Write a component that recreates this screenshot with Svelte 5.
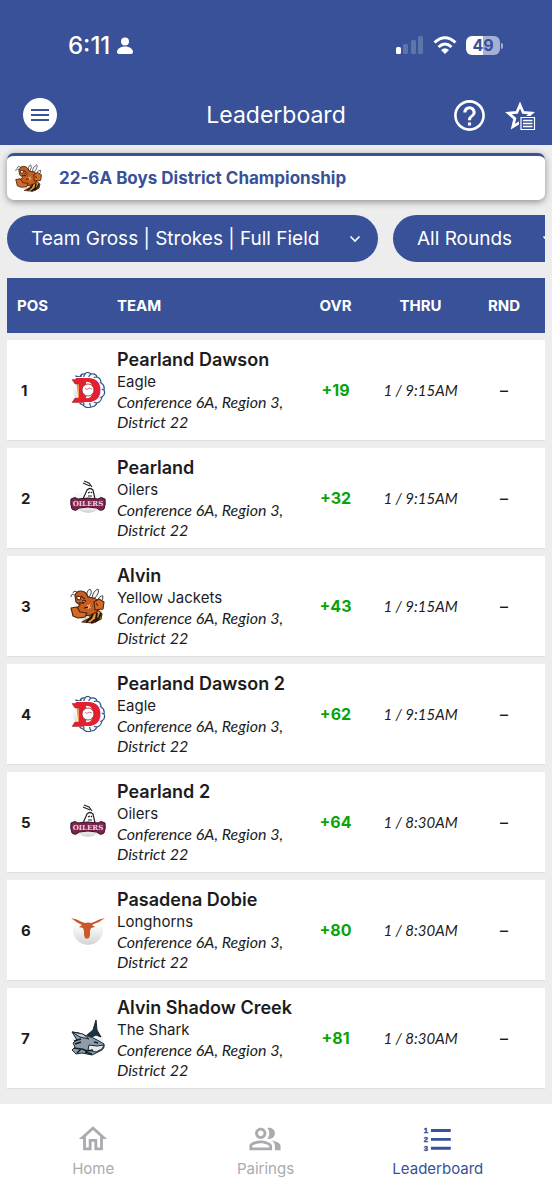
<script lang="ts">
	type Logo = 'eagle' | 'oilers' | 'jackets' | 'longhorns' | 'shark';

	interface Team {
		pos: number;
		name: string;
		mascot: string;
		logo: Logo;
		overall: string;
		thru: string;
	}

	const district = 'Conference 6A, Region 3, District 22';

	const teams: Team[] = [
		{ pos: 1, name: 'Pearland Dawson', mascot: 'Eagle', logo: 'eagle', overall: '+19', thru: '1 / 9:15AM' },
		{ pos: 2, name: 'Pearland', mascot: 'Oilers', logo: 'oilers', overall: '+32', thru: '1 / 9:15AM' },
		{ pos: 3, name: 'Alvin', mascot: 'Yellow Jackets', logo: 'jackets', overall: '+43', thru: '1 / 9:15AM' },
		{ pos: 4, name: 'Pearland Dawson 2', mascot: 'Eagle', logo: 'eagle', overall: '+62', thru: '1 / 9:15AM' },
		{ pos: 5, name: 'Pearland 2', mascot: 'Oilers', logo: 'oilers', overall: '+64', thru: '1 / 8:30AM' },
		{ pos: 6, name: 'Pasadena Dobie', mascot: 'Longhorns', logo: 'longhorns', overall: '+80', thru: '1 / 8:30AM' },
		{ pos: 7, name: 'Alvin Shadow Creek', mascot: 'The Shark', logo: 'shark', overall: '+81', thru: '1 / 8:30AM' }
	];
</script>

{#snippet chevron()}
	<svg class="chevron" viewBox="0 0 12 12" aria-hidden="true">
		<path d="M1.500 3.500 6 8l4.500-4.500" fill="none" stroke="#fff" stroke-width="1.600" />
	</svg>
{/snippet}

{#snippet teamLogo(logo: Logo)}
	<svg class="logo" viewBox="0 0 36 36" aria-hidden="true">
		<defs>
			<linearGradient id="disc-{logo}" x1="0" y1="0" x2="0" y2="1">
				<stop offset="0.3" stop-color="#fff" />
				<stop offset="1" stop-color="#d4d4d6" />
			</linearGradient>
		</defs>
		<circle cx="18" cy="18" r="15" fill="url(#disc-{logo})" />
		{#if logo === 'eagle'}
			<g fill="#f7fafc" stroke="#2c5580" stroke-width="1.200">
				<path d="M7 9 6 4l4 1q1-4 5-3 2-3 6 0 5-1 6 3 4 1 4 6 4 2 3 7 2 4-2 7-1 5-5 6-2 4-6 4-5 2-8-2-4-1-4-5Z" />
				<path d="M11 3v6M15 2q-3 4 1 6M21 2q-4 3-1 6M27 5q-5 0-4 5M31 11q-3-1-4 2M34 18q-4-2-5 0M32 25q-4 1-5-2M27 31q-4 0-4-4M21 35q-2-3-1-7M14 33q-1-3 1-5" fill="none" />
			</g>
			<text
				x="18"
				y="29"
				text-anchor="middle"
				font-family="DejaVu Serif, serif"
				font-weight="700"
				font-size="29"
				fill="#e3202d"
				stroke="#fff"
				stroke-width="4"
				paint-order="stroke">D</text
			>
			<path d="M2 7.500h12v4.500H5ZM2 30.500h12V26H5Z" fill="#e3202d" stroke="#8a2a3a" stroke-width="0.500" />
			<text
				x="18"
				y="29"
				text-anchor="middle"
				font-family="DejaVu Serif, serif"
				font-weight="700"
				font-size="29"
				fill="#e3202d"
				stroke="#e3202d"
				stroke-width="2">D</text
			>
			<circle cx="18" cy="18" r="6" fill="#fff" stroke="#8a2a3a" stroke-width="0.800" />
			<path d="m15 16 2 1.500 2-1.500 3 1" fill="none" stroke="#e4707a" stroke-width="1" />
		{:else if logo === 'oilers'}
			<g fill="none" stroke="#222" stroke-width="1.200">
				<path d="m14 1 5 2 3 4M13 3l7 3" />
				<path d="m13 19 4-9q3-3 6 0l2 9" fill="#fff" />
				<path d="m18 13 2-1M21 12l1 1M18 16h4" />
			</g>
			<path
				d="M1 19q4-3 7 0 10-2 20 0 3-3 7 0 1 5-1 10-4 3-7-1-9-2-18 0-3 4-7 1-2-5-1-10Z"
				fill="#7a2551"
				stroke="#3d1229"
			/>
			<text
				x="18"
				y="26"
				text-anchor="middle"
				font-family="DejaVu Serif, serif"
				font-weight="700"
				font-size="7"
				fill="#f0cfdf">OILERS</text
			>
			<path d="M8 31q10-4 20 0" fill="none" stroke="#eee" />
		{:else if logo === 'jackets'}
			<g fill="#f4f6fa" stroke="#333" stroke-width="0.900">
				<path d="M17 9q-1-6 3-8 3 3-1 8ZM22 10q1-7 6-9 2 3-3 9ZM27 13q3-6 6-5 1 4-4 7Z" />
				<path d="M6 8Q1 4 1 9M9 6Q4 1 3 5" fill="none" />
			</g>
			<g stroke="#4a220d" stroke-width="1.100" stroke-linejoin="round">
				<path d="M19 23q9-3 13 3l-1 5-8 4-11-1 8-4Z" fill="#e39a43" />
				<path d="M5 8q1-5 6-5 5 0 7 6l5 1q6 1 6 8l-2 6-6 3-7 1-6-3-1-5 3-3-4-3Z" fill="#c75d1e" />
				<path d="m1 20 6-1 3 5 7 1-2 4-7 1-5-2Z" fill="#d36a25" />
				<path d="m24 14 5-3 5 3-1 7-8 1Z" fill="#d36a25" />
			</g>
			<path d="m23 26-2 4-5 4M27 25l-1 6-5 4M31 25l-2 5-4 4" fill="none" stroke="#21150f" stroke-width="2" />
			<path d="m7 8 4 1-1 3-3-1ZM13 12l3 1-3 2Z" fill="#fff" stroke="#261309" stroke-width="0.900" />
			<path d="m11 8 4 3M9 15h5M14 20l5-1M26 15l2 3" fill="none" stroke="#261309" />
			<path d="m17 17 4 3M20 16l-2 5" stroke="#f4c89d" />
		{:else if logo === 'longhorns'}
			<path
				d="M1 6q6 1 11 4l3 1q3-1 6 0l3-1q5-3 11-4-5 4-11 6l-2 1 3 2-4 1-1 3v4l-1 3q-2 1-4 0l-1-3v-4l-1-3-4-1 3-2-2-1Q6 10 1 6Z"
				fill="#c9582a"
			/>
		{:else}
			<g stroke="#172832" stroke-width="1" stroke-linejoin="round">
				<path d="m17 15 6-5 3-10 1 10 4 7-5-2-4 2Z" fill="#1d3542" />
				<path d="M2 12q6 0 12 3 9 2 15 6l5 3q1 5-4 7l-8 4-10-2-6 1-4-4 3-3-2-4 4-3Z" fill="#8e9da8" />
				<path d="m2 12 11 2 6 5-9-2Z" fill="#c7d0d5" />
				<path d="m19 25 8 1 7-1-2 4-6 3-8-2Z" fill="#e4e9ec" />
			</g>
			<path d="m4 21 7-2M5 24l6-2M24 22l4 1M12 29l5 2 6-1M4 28l7 1-4 4M15 32l7 2" fill="none" stroke="#10202a" stroke-width="1.500" />
		{/if}
	</svg>
{/snippet}

<div class="page">
	<header>
		<div class="status">
			<div class="clock">
				<span>6:11</span>
				<svg width="16" height="17" viewBox="0 0 16 17" aria-hidden="true">
					<circle cx="8" cy="4.500" r="4" fill="#fff" />
					<path d="M0 15c0-3 3-5.500 8-5.500s8 2.500 8 5.500q0 2-2 2H2q-2 0-2-2Z" fill="#fff" />
				</svg>
			</div>
			<div class="signals">
				<svg width="28" height="18" viewBox="0 0 28 18" aria-hidden="true">
					<rect x="0" y="11" width="5" height="7" rx="1.500" fill="#fff" />
					<g fill="#fff" opacity="0.2">
						<rect x="7" y="8" width="5" height="10" rx="1.500" />
						<rect x="15" y="4" width="5" height="14" rx="1.500" />
						<rect x="22" y="0" width="5" height="18" rx="1.500" />
					</g>
				</svg>
				<svg width="24" height="18" viewBox="0 0 24 18" aria-hidden="true">
					<g fill="none" stroke="#fff" stroke-width="3">
						<path d="M1.500 6.500q10.500-9.500 21 0" />
						<path d="M5.500 11q6.500-6 13 0" />
					</g>
					<path d="M8 14q4-3.500 8 0l-4 4Z" fill="#fff" />
				</svg>
				<div class="battery">49</div>
			</div>
		</div>
		<div class="toolbar">
			<button class="menu" aria-label="Menu">
				<svg width="18" height="12" viewBox="0 0 18 12" aria-hidden="true">
					<path d="M0 1h18M0 6h18M0 11h18" stroke="#385198" stroke-width="2" />
				</svg>
			</button>
			<h1>Leaderboard</h1>
			<div class="actions">
				<button aria-label="Help">
					<svg width="37" height="37" viewBox="0 0 24 24" fill="#fff" aria-hidden="true">
						<path
							d="M11 16.500h2v2h-2v-2zm1-14.500C6.480 2 2 6.480 2 12s4.480 10 10 10 10-4.480 10-10S17.520 2 12 2zm0 18.300c-4.580 0-8.300-3.720-8.300-8.300S7.420 3.700 12 3.700s8.300 3.720 8.300 8.300-3.720 8.300-8.300 8.300zM12 6c-2.210 0-4 1.790-4 4h2c0-1.100.9-2 2-2s2 .9 2 2c0 2-3 1.750-3 5h2c0-2.250 3-2.500 3-5 0-2.210-1.790-4-4-4z"
						/>
					</svg>
				</button>
				<button aria-label="Favorites list">
					<svg width="31" height="31" viewBox="0 0 31 31" aria-hidden="true">
						<path
							d="m15 5 3.200 7.500 8.300.7-6.300 5.400 1.900 8.100L15 22.400l-7.100 4.300 1.900-8.100-6.300-5.400 8.300-.7Z"
							fill="none"
							stroke="#fff"
							stroke-width="2.800"
						/>
						<path d="M14 16h17v15H14Z" fill="#385198" />
						<path d="M16 17.500h13.500v12H16Z" fill="#385198" stroke="#fff" stroke-width="1.200" />
						<path d="M18 20.500h9.500M18 23.500h9.500M18 26.500h9.500" stroke="#fff" stroke-width="1.300" />
					</svg>
				</button>
			</div>
		</div>
	</header>

	<main>
		<div class="event">
			{@render teamLogo('jackets')}
			<h2>22-6A Boys District Championship</h2>
		</div>

		<div class="filters">
			<div class="filter">
				<select aria-label="Leaderboard type">
					<option>Team Gross | Strokes | Full Field</option>
				</select>
				{@render chevron()}
			</div>
			<div class="filter">
				<select aria-label="Round">
					<option>All Rounds</option>
				</select>
				{@render chevron()}
			</div>
		</div>

		<table>
			<colgroup>
				<col class="col-pos" />
				<col class="col-logo" />
				<col />
				<col class="col-ovr" />
				<col class="col-thru" />
				<col class="col-rnd" />
			</colgroup>
			<thead>
				<tr>
					<th class="pos">POS</th>
					<th></th>
					<th class="team">TEAM</th>
					<th>OVR</th>
					<th>THRU</th>
					<th>RND</th>
				</tr>
			</thead>
			<tbody>
				{#each teams as team (team.pos)}
					<tr>
						<td class="pos">{team.pos}</td>
						<td>{@render teamLogo(team.logo)}</td>
						<td class="team">
							<h3>{team.name}</h3>
							<p>{team.mascot}</p>
							<p class="district">{district}</p>
						</td>
						<td class="overall">{team.overall}</td>
						<td class="thru">{team.thru}</td>
						<td class="round">–</td>
					</tr>
				{/each}
			</tbody>
		</table>
	</main>

	<nav>
		<a href="#home">
			<svg viewBox="0 0 24 24" fill="currentColor" aria-hidden="true">
				<path d="M12 5.690l5 4.500V18h-2v-6H9v6H7v-7.810l5-4.500M12 3L2 12h3v8h6v-6h2v6h6v-8h3L12 3z" />
			</svg>
			Home
		</a>
		<a href="#pairings">
			<svg viewBox="0 0 24 24" fill="currentColor" aria-hidden="true">
				<path
					d="M16.670 13.130C18.040 14.060 19 15.320 19 17v3h4v-3c0-2.180-3.570-3.470-6.330-3.870zM15 12c2.210 0 4-1.790 4-4s-1.790-4-4-4c-.47 0-.91.1-1.330.24C14.500 5.270 15 6.580 15 8s-.5 2.730-1.330 3.760c.42.14.86.24 1.330.24zM9 12c2.210 0 4-1.790 4-4s-1.790-4-4-4-4 1.790-4 4 1.790 4 4 4zm0-6c1.100 0 2 .9 2 2s-.9 2-2 2-2-.9-2-2 .9-2 2-2zM9 13c-2.670 0-8 1.340-8 4v3h16v-3c0-2.660-5.330-4-8-4zm6 5H3v-.99C3.200 16.290 6.300 15 9 15s5.800 1.290 6 2v1z"
				/>
			</svg>
			Pairings
		</a>
		<a href="#leaderboard" class="active" aria-current="page">
			<svg viewBox="0 0 24 24" fill="currentColor" aria-hidden="true">
				<path d="M7 5h14v2H7zM7 11.300h14v2H7zM7 17.500h14v2H7z" />
				<g font-family="Liberation Sans, sans-serif" font-weight="700" font-size="5.400" stroke="currentColor" stroke-width="0.300">
					<text x="2" y="8">1</text>
					<text x="2" y="14.300">2</text>
					<text x="2" y="20.600">3</text>
				</g>
			</svg>
			Leaderboard
		</a>
	</nav>
</div>

<style>
	:global(body) {
		margin: 0;
		background: #ededee;
	}

	.page {
		--brand: #385198;
		display: flex;
		flex-direction: column;
		min-height: 100vh;
		font-family: Inter, 'Liberation Sans', sans-serif;
		color: #1c1c1e;
		overflow: hidden;
	}

	h1,
	h2,
	h3,
	p {
		margin: 0;
	}

	button {
		display: grid;
		place-items: center;
		padding: 0;
		border: 0;
		background: none;
	}

	svg {
		display: block;
	}

	header {
		background: var(--brand);
		color: #fff;
		padding-top: 28px;
	}

	.status {
		display: flex;
		justify-content: space-between;
		align-items: center;
		height: 34px;
		padding: 0 52px 0 68px;
	}

	.clock {
		display: flex;
		align-items: center;
		gap: 7px;
		font-size: 24px;
		font-weight: 500;
	}

	.signals {
		display: flex;
		align-items: center;
		gap: 9px;
	}

	.battery {
		position: relative;
		width: 34px;
		height: 19px;
		border-radius: 6px;
		background: linear-gradient(90deg, #fff 49%, #a5b1d4 49%);
		color: var(--brand);
		font-size: 16px;
		font-weight: 700;
		line-height: 19px;
		text-align: center;
	}

	.battery::after {
		content: '';
		position: absolute;
		right: -3px;
		top: 7px;
		width: 2px;
		height: 6px;
		border-radius: 0 2px 2px 0;
		background: #a5b1d4;
	}

	.toolbar {
		display: grid;
		grid-template-columns: 1fr auto 1fr;
		align-items: center;
		height: 60px;
		padding: 0 16px;
		margin-top: 23px;
	}

	.menu {
		width: 34px;
		height: 34px;
		margin-left: 7px;
		border-radius: 50%;
		background: #fff;
	}

	h1 {
		font-size: 23px;
		font-weight: 400;
	}

	.actions {
		display: flex;
		align-items: center;
		justify-content: flex-end;
		gap: 17px;
	}

	main {
		flex: 1;
		padding: 8px 7px;
	}

	.event {
		display: flex;
		align-items: center;
		gap: 16px;
		height: 44px;
		padding: 0 8px;
		border-top: 3px solid var(--brand);
		border-radius: 7px;
		background: #fff;
		box-shadow: 0 2px 7px rgba(0, 0, 0, 0.4);
	}

	.event .logo {
		width: 28px;
		height: 28px;
		margin: 0;
	}

	h2 {
		color: var(--brand);
		font-size: 17px;
		font-weight: 700;
	}

	.filters {
		display: flex;
		gap: 15px;
		margin-top: 15px;
		overflow: hidden;
	}

	.filter {
		display: grid;
		flex: none;
		align-items: center;
	}

	.filter > :global(*) {
		grid-area: 1 / 1;
	}

	select {
		appearance: none;
		height: 47px;
		padding: 0 58px 0 24px;
		border: 0;
		border-radius: 24px;
		background: var(--brand);
		color: #fff;
		font: 400 19px Inter, 'Liberation Sans', sans-serif;
	}

	.chevron {
		justify-self: end;
		width: 12px;
		height: 12px;
		margin-right: 17px;
		pointer-events: none;
	}

	table {
		width: 100%;
		margin-top: 9px;
		table-layout: fixed;
		border-collapse: separate;
		border-spacing: 0 7px;
	}

	.col-pos,
	.col-logo {
		width: 55px;
	}

	.col-ovr,
	.col-thru {
		width: 85px;
	}

	.col-rnd {
		width: 82px;
	}

	th {
		height: 55px;
		padding: 0;
		background: var(--brand);
		color: #fff;
		font-size: 15px;
		font-weight: 700;
	}

	td {
		height: 84px;
		padding: 8px 0;
		border-bottom: 1px solid #dcdcde;
		background: #fff;
		text-align: center;
	}

	th.pos {
		padding-left: 10px;
		text-align: left;
	}

	td.pos {
		padding-left: 14px;
		font-size: 15px;
		font-weight: 700;
		text-align: left;
	}

	.logo {
		width: 36px;
		height: 36px;
		margin-left: 8px;
	}

	.team {
		text-align: left;
	}

	h3 {
		font-size: 18px;
		font-weight: 600;
		line-height: 24px;
		white-space: nowrap;
	}

	p {
		font-size: 15px;
		line-height: 20px;
	}

	.district {
		font-family: Lato, 'Liberation Sans', sans-serif;
		font-size: 16px;
		font-style: italic;
	}

	.thru {
		font-family: Lato, 'Liberation Sans', sans-serif;
		font-size: 15px;
		font-style: italic;
	}

	.overall {
		color: #0aa30a;
		font-size: 16px;
		font-weight: 700;
	}

	.round {
		font-size: 16px;
		font-weight: 500;
	}

	nav {
		display: grid;
		grid-template-columns: repeat(3, 1fr);
		height: 76px;
		padding: 18px 28px 2px 7px;
		background: #fff;
	}

	nav a {
		display: flex;
		flex-direction: column;
		align-items: center;
		gap: 3px;
		color: #a9abae;
		font-size: 15px;
		line-height: 20px;
		text-decoration: none;
	}

	nav svg {
		width: 34px;
		height: 34px;
	}

	nav .active {
		color: var(--brand);
	}
</style>
